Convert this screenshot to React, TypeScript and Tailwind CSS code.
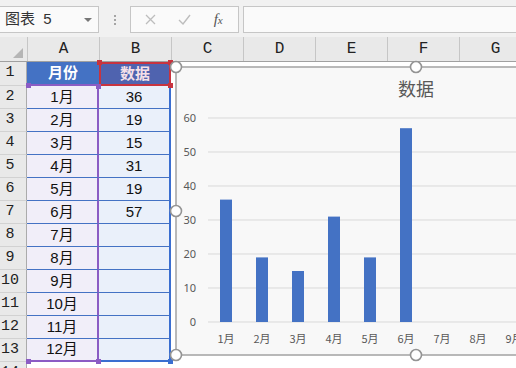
import React from "react";

// =============================================================================
// SHEET - Excel-like grid with a column chart over it
// =============================================================================

const rows: [string, string][] = [
  ["1月", "36"],
  ["2月", "19"],
  ["3月", "15"],
  ["4月", "31"],
  ["5月", "19"],
  ["6月", "57"],
  ["7月", ""],
  ["8月", ""],
  ["9月", ""],
  ["10月", ""],
  ["11月", ""],
  ["12月", ""],
];

const letters = ["A", "B", "C", "D", "E", "F", "G"];
const values = [36, 19, 15, 31, 19, 57];
const months = ["1月", "2月", "3月", "4月", "5月", "6月", "7月", "8月", "9月"];
const ticks = [0, 10, 20, 30, 40, 50, 60];

const cjk = "font-['Liberation_Sans','Noto_Sans_CJK_SC',sans-serif]";
const mono = "font-['Liberation_Mono','DejaVu_Sans_Mono',monospace]";

const Square: React.FC<{ x: number; y: number; color: string }> = ({ x, y, color }) => (
  <div
    className="absolute h-[5px] w-[5px]"
    style={{ left: x - 2.5, top: y - 2.5, backgroundColor: color }}
  />
);

const RowHead: React.FC<{ n: number; h: string }> = ({ n, h }) => (
  <div
    className={`flex ${h} w-[27px] shrink-0 items-center border-r border-b border-r-[#ABABAB] border-b-[#D2D2D2] bg-[#E9E9E9] text-[15px] text-[#222] ${mono}`}
  >
    <span className="w-[20px] text-center">{n}</span>
  </div>
);

const Chart = () => {
  const y = (v: number) => 255 - v * 3.4;
  return (
    <svg
      width={480}
      height={288}
      className="absolute left-[176px] top-[67px] overflow-visible"
    >
      <rect x={0} y={0} width={480} height={288} fill="#F8F8F8" stroke="#A3A3A3" strokeWidth={1.5} />
      <text x={240} y={29} textAnchor="middle" fontSize={18} fill="#595959" fontFamily="'Noto Sans CJK SC', sans-serif">
        数据
      </text>
      {ticks.map((t) => (
        <g key={t}>
          <line x1={32} x2={470} y1={y(t)} y2={y(t)} stroke="#D9D9D9" strokeWidth={1} />
          <text x={20} y={y(t) + 4} textAnchor="end" fontSize={11} fill="#595959" fontFamily="'Noto Sans', sans-serif">
            {t}
          </text>
        </g>
      ))}
      {values.map((v, i) => (
        <rect key={i} x={44 + 36 * i} y={y(v)} width={12} height={v * 3.4} fill="#4472C4" />
      ))}
      {months.map((m, i) => (
        <text key={m} x={50 + 36 * i} y={276} textAnchor="middle" fontSize={11} fill="#595959" fontFamily="'Noto Sans CJK SC', sans-serif">
          {m}
        </text>
      ))}
      {[
        [0, 0],
        [240, 0],
        [0, 144],
        [0, 288],
        [240, 288],
      ].map(([cx, cy], i) => (
        <circle key={i} cx={cx} cy={cy} r={5.5} fill="#FFFFFF" stroke="#949494" strokeWidth={1.6} />
      ))}
    </svg>
  );
};

export default function App() {
  return (
    <div className={`relative h-[368px] w-[516px] overflow-hidden bg-white ${cjk}`}>
      {/* Formula bar */}
      <div className="flex h-[37px] bg-[#F1F1F1] pt-[6px]">
        <div className="flex h-[27px] w-[99px] shrink-0 items-center justify-between border border-l-0 border-[#C6C6C6] bg-[#FAFAFA] pl-[5px] pr-[6px] text-[15px] text-[#333]">
          <span className="whitespace-pre">图表  5</span>
          <span className="h-0 w-0 border-x-[4px] border-t-[4px] border-x-transparent border-t-[#777]" />
        </div>
        <div className="flex h-[27px] w-[31px] shrink-0 flex-col items-center justify-center gap-[2px]">
          <span className="h-[2px] w-[2px] bg-[#A5A5A5]" />
          <span className="h-[2px] w-[2px] bg-[#A5A5A5]" />
          <span className="h-[2px] w-[2px] bg-[#A5A5A5]" />
        </div>
        <div className="flex h-[27px] w-[109px] shrink-0 items-center border border-[#C6C6C6] bg-[#FAFAFA] px-[3px]">
          <div className="flex w-[35px] justify-center">
            <svg width="11" height="11" viewBox="0 0 11 11">
              <path d="M1 1L10 10M10 1L1 10" stroke="#BDBDBD" strokeWidth="1.3" />
            </svg>
          </div>
          <div className="flex w-[35px] justify-center">
            <svg width="13" height="11" viewBox="0 0 13 11">
              <path d="M1 6L5 10L12 1" stroke="#BDBDBD" strokeWidth="1.4" fill="none" />
            </svg>
          </div>
          <div className="flex w-[35px] items-baseline justify-center font-['Liberation_Serif',serif] text-[15px] italic leading-none text-[#555]">
            f<span className="text-[11px]">x</span>
          </div>
        </div>
        <div className="ml-[4px] h-[27px] flex-1 border border-r-0 border-[#C6C6C6] bg-[#FAFAFA]" />
      </div>

      {/* Column headers */}
      <div className={`flex h-[25px] border-b border-[#A0A0A0] bg-[#E9E9E9] text-[16px] text-[#222] ${mono}`}>
        <div className="relative w-[27px] shrink-0">
          <div className="absolute bottom-[3px] right-[4px] h-0 w-0 border-b-[10px] border-l-[10px] border-b-[#B5B5B5] border-l-transparent" />
        </div>
        {letters.map((l) => (
          <div key={l} className="flex w-[72px] shrink-0 flex-col">
            <div className="h-[6px]" />
            <div className="flex flex-1 items-center justify-center border-l border-[#C6C6C6]">{l}</div>
          </div>
        ))}
      </div>

      {/* Row 1 */}
      <div className="flex">
        <RowHead n={1} h="h-[24px]" />
        <div className="flex h-[24px] w-[72px] shrink-0 items-center justify-center border-b-2 border-[#8B5CC4] bg-[#4472C4] text-[15px] font-bold text-white">
          月份
        </div>
        <div className="flex h-[24px] w-[72px] shrink-0 items-center justify-center border-2 border-[#C8343F] bg-[#4F63AF] text-[15px] font-bold text-[#F5E0E8]">
          数据
        </div>
      </div>

      {/* Data rows */}
      {rows.map(([m, v], i) => {
        const last = i === rows.length - 1;
        return (
          <div key={m} className="flex">
            <RowHead n={i + 2} h="h-[23px]" />
            <div
              className={`flex h-[23px] w-[72px] shrink-0 items-center justify-center border-r-2 border-r-[#8B5CC4] bg-[#F1EEF9] text-[15px] text-[#111] ${
                last ? "border-b-2 border-b-[#8B5CC4]" : "border-b border-b-[#4472C4]"
              }`}
            >
              {m}
            </div>
            <div
              className={`flex h-[23px] w-[72px] shrink-0 items-center justify-center border-r-2 border-r-[#3A6ED0] bg-[#EAF0FA] text-[15px] text-[#111] ${
                last ? "border-b-2 border-b-[#3A6ED0]" : "border-b border-b-[#4472C4]"
              }`}
            >
              {v}
            </div>
          </div>
        );
      })}

      {/* Row 14 (cut off) */}
      <div className="flex">
        <RowHead n={14} h="h-[23px]" />
      </div>

      {/* Range handles */}
      <Square x={99} y={62} color="#C8343F" />
      <Square x={170} y={62} color="#C8343F" />
      <Square x={170} y={85} color="#C8343F" />
      <Square x={28} y={85} color="#8B5CC4" />
      <Square x={98} y={86} color="#8B5CC4" />
      <Square x={28} y={361} color="#8B5CC4" />
      <Square x={98} y={361} color="#8B5CC4" />
      <Square x={170} y={361} color="#3A6ED0" />

      <Chart />
    </div>
  );
}
